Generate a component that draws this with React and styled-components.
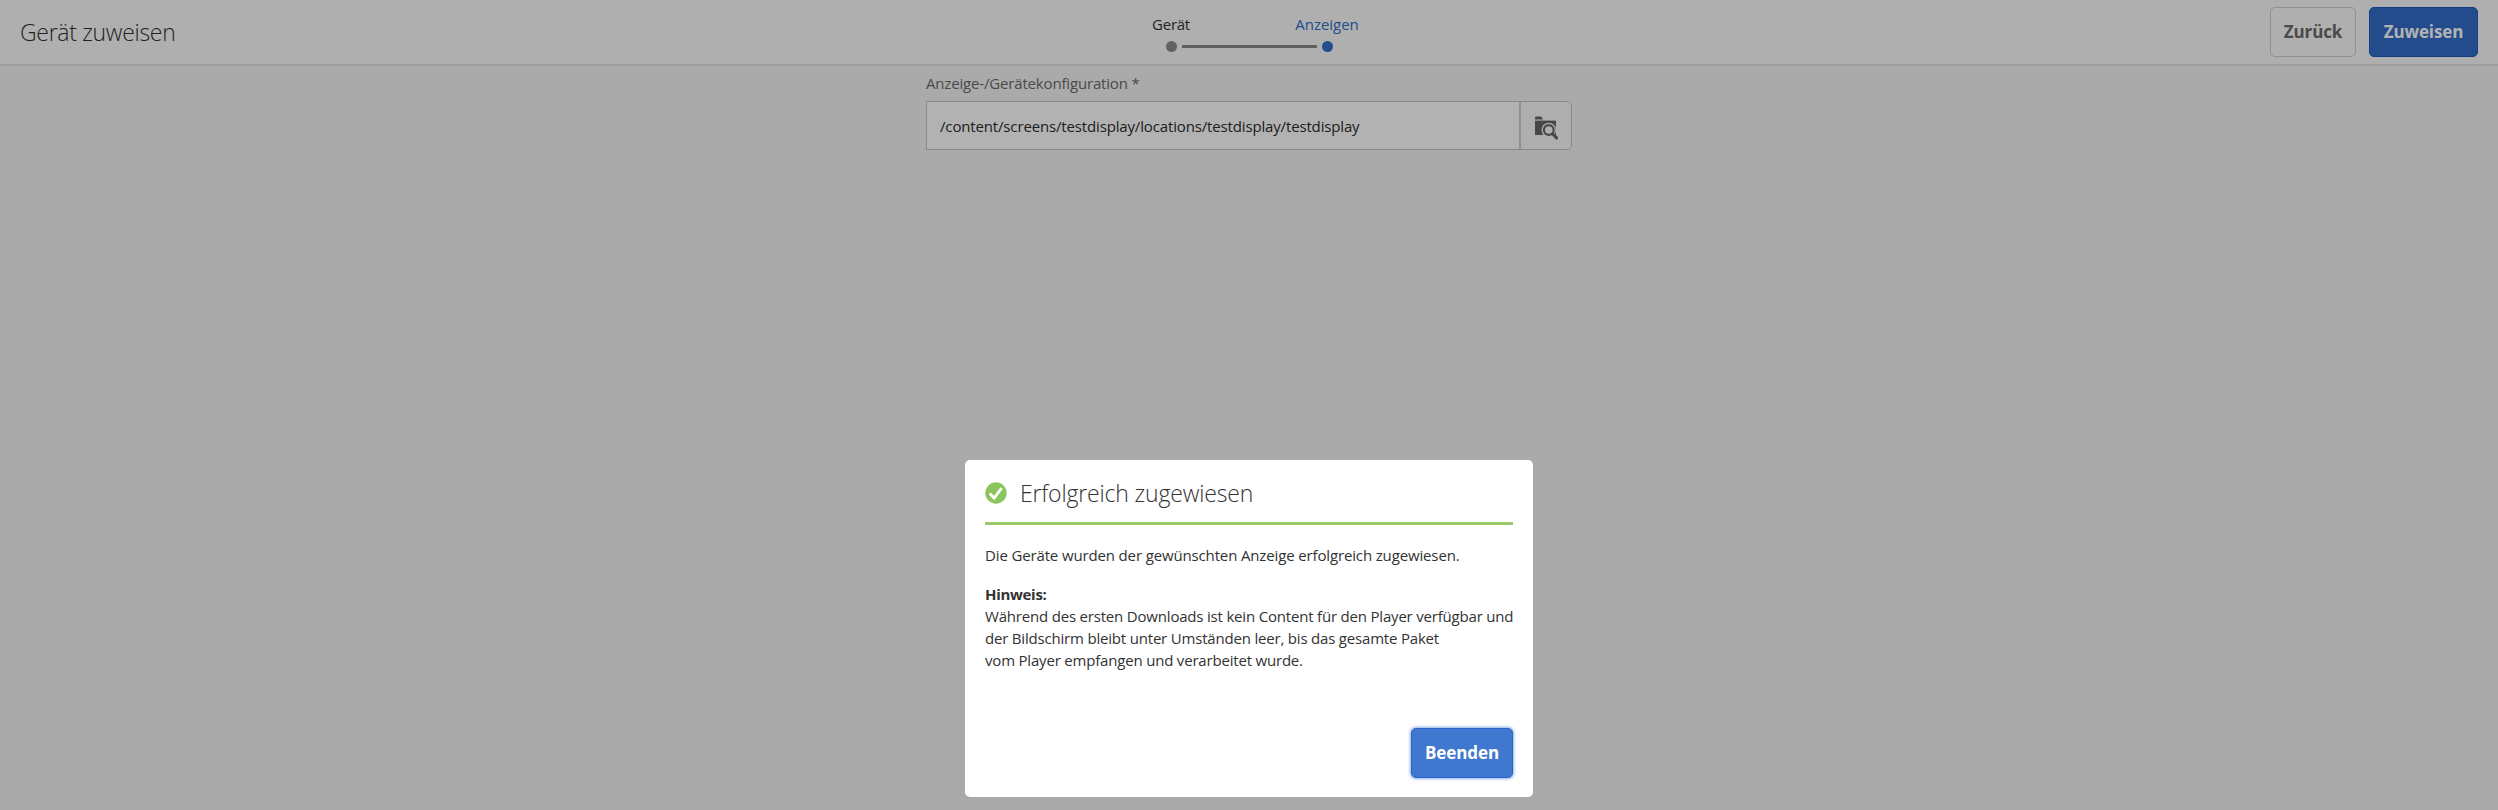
import React from 'react';
import styled, { createGlobalStyle } from 'styled-components';

const GlobalStyle = createGlobalStyle`
  *, *::before, *::after { box-sizing: border-box; }
  body {
    margin: 0;
    background: #f4f4f4;
    color: #323232;
    font: 15px/22px "Open Sans", "Noto Sans", sans-serif;
  }
`;

const Page = styled.div`
  height: 100vh;
  overflow: hidden;
`;

const Header = styled.header`
  display: grid;
  grid-template-columns: 1fr auto 1fr;
  height: 66px;
  padding: 0 20px;
  background: #fbfbfb;
  border-bottom: 2px solid #e3e3e3;
`;

const PageTitle = styled.h1`
  margin: 0;
  font-size: 23px;
  font-weight: 300;
  line-height: 64px;
  letter-spacing: -0.3px;
`;

const Steps = styled.ol`
  display: flex;
  align-items: flex-end;
  height: 52px;
  margin: 0;
  padding: 0;
  list-style: none;
`;

const Step = styled.li`
  display: flex;
  flex-direction: column;
  align-items: center;
  gap: 8px;
  width: 11px;
  line-height: 18px;
  white-space: nowrap;
  color: ${(p) => (p.$active ? '#326ec8' : '#323232')};
  letter-spacing: ${(p) => (p.$active ? '-0.05px' : '-0.25px')};
`;

const StepDot = styled.span`
  width: 11px;
  height: 11px;
  border-radius: 50%;
  background: ${(p) => (p.$active ? '#326ec8' : '#8e8e8e')};
`;

const StepLine = styled.li`
  width: 135px;
  height: 3px;
  margin: 0 5px 4px;
  background: #8a8a8a;
`;

const Actions = styled.div`
  display: flex;
  justify-content: flex-end;
  align-items: center;
  gap: 13px;
  height: 64px;
`;

const Button = styled.button`
  width: ${(p) => p.$width}px;
  height: 50px;
  padding: 0;
  border: ${(p) => (p.$primary ? '1px solid #1f5abd' : '1.5px solid #d0d0d0')};
  border-radius: 5px;
  background: ${(p) => (p.$primary ? '#326ec8' : 'transparent')};
  color: ${(p) => (p.$primary ? '#fff' : '#6b6b6b')};
  font: 700 17px/48px "Open Sans", "Noto Sans", sans-serif;
  letter-spacing: -0.1px;
`;

const FinishButton = styled(Button)`
  background: #4178cf;
  border-color: #2765c8;
  box-shadow: 0 0 3px 1px #8fb1e6;
`;

const Form = styled.main`
  width: 646px;
  margin: 0 auto;
  padding-top: 6px;
`;

const Label = styled.label`
  display: block;
  line-height: 22px;
  color: #6b6b6b;
  letter-spacing: -0.17px;
`;

const PathField = styled.div`
  display: flex;
  height: 49px;
  margin-top: 7px;
  border: 1px solid #c4c4c4;
  border-radius: 0 5px 5px 0;
`;

const PathValue = styled.div`
  flex: 1;
  padding: 2px 0 0 13px;
  line-height: 45px;
  background: #fff;
  color: #2c2c2c;
  letter-spacing: -0.15px;
`;

const BrowseButton = styled.button`
  width: 52px;
  padding: 4px 0 0;
  border: 0;
  border-left: 2px solid #cfcfcf;
  border-radius: 0 4px 4px 0;
  background: #f9f9f9;
  display: grid;
  place-items: center;
`;

const Backdrop = styled.div`
  position: fixed;
  inset: 0;
  display: flex;
  justify-content: center;
  align-items: flex-end;
  padding-bottom: 13px;
  background: rgba(0, 0, 0, 0.3);
`;

const Dialog = styled.section`
  display: flex;
  flex-direction: column;
  width: 568px;
  height: 337px;
  padding: 0 20px 19px;
  border-radius: 5px;
  background: #fff;
`;

const DialogHeader = styled.header`
  display: flex;
  align-items: center;
  gap: 12px;
  height: 65px;
  padding-top: 3px;
  border-bottom: 3px solid #98cc68;
`;

const DialogTitle = styled.h2`
  margin: 0;
  font-size: 23px;
  font-weight: 300;
  line-height: 32px;
  letter-spacing: -0.16px;
`;

const Message = styled.p`
  margin: 19px 0 17px;
  letter-spacing: -0.14px;
`;

const Line = styled.span`
  display: block;
  white-space: nowrap;
  letter-spacing: -0.19px;
`;

const NoteLabel = styled.strong`
  display: block;
  letter-spacing: -0.3px;
`;

const DialogFooter = styled.footer`
  display: flex;
  justify-content: flex-end;
  margin-top: auto;
`;

const BrowseIcon = () => (
  <svg width="24" height="24" viewBox="0 0 24 24">
    <path d="M1 3.5V1.4L1.8.6h5.4L9 3.5z" fill="#666" />
    <path d="M1 4.6h21V19H1z" fill="#666" />
    <circle cx="14.8" cy="14" r="7.3" fill="#f9f9f9" />
    <circle cx="14.8" cy="14" r="4.9" fill="none" stroke="#666" strokeWidth="2.2" />
    <path d="m18.6 17.9 4 4" stroke="#666" strokeWidth="3" strokeLinecap="round" />
  </svg>
);

const SuccessIcon = () => (
  <svg width="23" height="22" viewBox="0 0 23 22">
    <circle cx="11" cy="11" r="10.7" fill="#8bc55c" />
    <path d="m4.7 11.4 4.5 4.6 7.4-10" fill="none" stroke="#fff" strokeWidth="2.8" />
  </svg>
);

export default function App() {
  return (
    <Page>
      <GlobalStyle />
      <Header>
        <PageTitle>Gerät zuweisen</PageTitle>
        <Steps>
          <Step>
            Gerät
            <StepDot />
          </Step>
          <StepLine />
          <Step $active>
            Anzeigen
            <StepDot $active />
          </Step>
        </Steps>
        <Actions>
          <Button $width={86}>Zurück</Button>
          <Button $width={109} $primary>Zuweisen</Button>
        </Actions>
      </Header>
      <Form>
        <Label>Anzeige-/Gerätekonfiguration *</Label>
        <PathField>
          <PathValue>/content/screens/testdisplay/locations/testdisplay/testdisplay</PathValue>
          <BrowseButton>
            <BrowseIcon />
          </BrowseButton>
        </PathField>
      </Form>
      <Backdrop>
        <Dialog>
          <DialogHeader>
            <SuccessIcon />
            <DialogTitle>Erfolgreich zugewiesen</DialogTitle>
          </DialogHeader>
          <Message>Die Geräte wurden der gewünschten Anzeige erfolgreich zugewiesen.</Message>
          <NoteLabel>Hinweis:</NoteLabel>
          <Line>Während des ersten Downloads ist kein Content für den Player verfügbar und</Line>
          <Line>der Bildschirm bleibt unter Umständen leer, bis das gesamte Paket</Line>
          <Line>vom Player empfangen und verarbeitet wurde.</Line>
          <DialogFooter>
            <FinishButton $width={102} $primary>Beenden</FinishButton>
          </DialogFooter>
        </Dialog>
      </Backdrop>
    </Page>
  );
}
